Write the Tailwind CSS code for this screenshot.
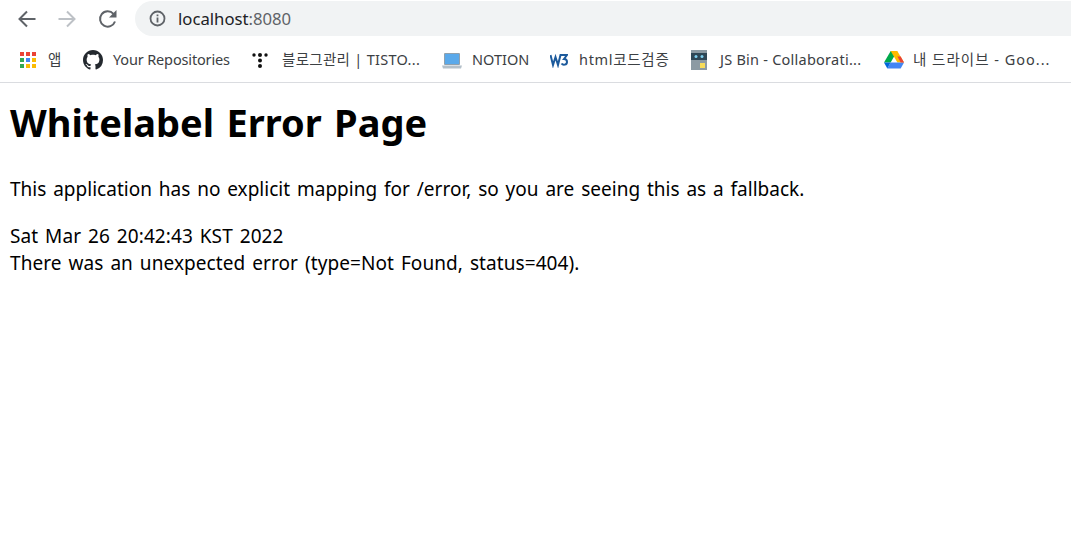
<!DOCTYPE html>
<html lang="ko">
  <head>
    <meta charset="UTF-8" />
    <title>Error</title>
    <script src="https://cdn.jsdelivr.net/npm/@tailwindcss/browser@4"></script>
  </head>
  <body class="bg-white h-[551px] w-[1071px] overflow-hidden font-['Noto_Sans','Noto_Sans_CJK_KR',sans-serif]">
    <!-- toolbar -->
    <div class="h-[37px] flex items-center pl-[17px]">
      <svg class="w-5 h-5" viewBox="0 0 20 20" fill="none" stroke="#5f6368" stroke-width="2"><path d="M18.500 10H3M10 2.500L2.500 10l7.500 7.500" /></svg>
      <svg class="w-5 h-5 ml-5" viewBox="0 0 20 20" fill="none" stroke="#bdc1c6" stroke-width="2"><path d="M1.500 10H17M10 2.500l7.500 7.500-7.500 7.500" /></svg>
      <svg class="w-5 h-5 ml-[21px]" viewBox="0 0 20 20" fill="none"><path d="M17 12.500A7.700 7.700 0 1 1 15.500 4.800" stroke="#5f6368" stroke-width="2" /><path d="M18.500 1V8.500H11z" fill="#5f6368" /></svg>
      <div class="ml-[17px] h-[35px] flex-1 rounded-l-[18px] bg-[#f1f3f4] flex items-center pl-[14px]">
        <svg class="w-[17px] h-[17px]" viewBox="0 0 17 17" fill="none"><circle cx="8.500" cy="8.500" r="7" stroke="#5f6368" stroke-width="1.800" /><path d="M8.500 7.500v5M8.500 4.400v1.800" stroke="#5f6368" stroke-width="1.800" /></svg>
        <span class="ml-3 pt-px text-[16.700px] text-[#202124] leading-none">localhost<span class="text-[#5f6368]">:8080</span></span>
      </div>
    </div>

    <!-- bookmarks -->
    <div class="h-[46px] border-b border-[#dadce0] flex items-center text-[14.500px] text-[#3c4043] whitespace-nowrap">
      <div class="ml-[20px] w-4 grid grid-cols-3 gap-[2px]">
        <i class="h-1 bg-[#ea4335]"></i><i class="h-1 bg-[#ea4335]"></i><i class="h-1 bg-[#ea4335]"></i>
        <i class="h-1 bg-[#34a853]"></i><i class="h-1 bg-[#4285f4]"></i><i class="h-1 bg-[#fbbc04]"></i>
        <i class="h-1 bg-[#34a853]"></i><i class="h-1 bg-[#fbbc04]"></i><i class="h-1 bg-[#fbbc04]"></i>
      </div>
      <span class="ml-3 w-[23px]">앱</span>

      <svg class="ml-[12px] w-5 h-5" viewBox="0 0 16 16" fill="#24292f"><path d="M8 0C3.580 0 0 3.580 0 8c0 3.540 2.290 6.530 5.470 7.590.4.070.55-.17.55-.38 0-.19-.01-.82-.01-1.490-2.010.370-2.530-.490-2.690-.940-.09-.230-.48-.940-.82-1.130-.28-.150-.68-.520-.01-.530.630-.010 1.080.580 1.230.820.720 1.210 1.870.870 2.330.660.070-.520.280-.870.510-1.070-1.780-.2-3.640-.890-3.640-3.950 0-.870.310-1.590.820-2.150-.08-.2-.36-1.020.08-2.120 0 0 .67-.21 2.200.820.640-.180 1.320-.270 2-.270s1.360.090 2 .270c1.530-1.040 2.200-.820 2.200-.820.440 1.100.160 1.920.080 2.120.510.560.820 1.270.820 2.150 0 3.070-1.870 3.750-3.650 3.950.290.250.540.730.540 1.480 0 1.070-.010 1.930-.010 2.200 0 .210.150.460.550.380A8.010 8.010 0 0 0 16 8c0-4.420-3.580-8-8-8z" /></svg>
      <span class="ml-[10px] w-[118px] tracking-[-0.15px]">Your Repositories</span>

      <svg class="ml-[21px] w-4 h-4" viewBox="0 0 16 16" fill="#111"><circle cx="2" cy="3" r="1.700" /><circle cx="8" cy="3" r="2" /><circle cx="14" cy="3" r="1.700" /><circle cx="8" cy="8.500" r="2" /><circle cx="8" cy="14" r="2" /></svg>
      <span class="ml-[14px] w-[139px] tracking-[0.3px]">블로그관리 | TISTO...</span>

      <svg class="ml-[21px] w-5 h-5" viewBox="0 0 20 20"><rect x="2" y="3" width="16" height="12" rx="1" fill="#8fa0ad" /><rect x="3" y="4" width="14" height="10" fill="#5aa9ea" /><path d="M0 15.500h20L19 18.500H1z" fill="#b4c0c9" /></svg>
      <span class="ml-[10px] w-[57px]">NOTION</span>

      <svg class="ml-[21px] w-[18px] h-[16px]" viewBox="0 0 18 16" fill="none" stroke="#1c5a9c" stroke-width="2"><path d="M0.500 3L3 13 5.500 5 8 13 10.500 3H17l-3 4c2 0 3 1 3 3 0 3-4 3.500-5.500 1.500" /></svg>
      <span class="ml-[11px] w-[91px] tracking-[0.7px]">html코드검증</span>

      <svg class="ml-[21px] w-4 h-5" viewBox="0 0 16 20"><rect width="16" height="20" fill="#8c9aa3" /><rect y="3" width="16" height="7" fill="#2f4756" /><circle cx="5" cy="6.500" r="1.500" fill="#7fd0f0" /><circle cx="11" cy="6.500" r="1.500" fill="#7fd0f0" /><rect x="9" y="13" width="5" height="5" fill="#f7dc5a" /></svg>
      <span class="ml-[13px] w-[143px] tracking-[0.24px]">JS Bin - Collaborati...</span>

      <svg class="ml-[21px] w-5 h-[18px]" viewBox="0 0 20 18"><path d="M6.700 0h6.600L6.600 11.500H0z" fill="#00a94b" /><path d="M6.700 0h6.600L20 11.500h-6.600z" fill="#ffba00" /><path d="M3.300 17.500L6.600 11.500H20l-3.300 6z" fill="#4285f4" /><path d="M0 11.500h6.600l-3.300 6z" fill="#0066da" /><path d="M20 11.500h-3.300l-3.300-6 3.300 0z" fill="#ea4335" /></svg>
      <span class="ml-[9px] tracking-[1px]">내 드라이브 - Goo...</span>
    </div>

    <!-- page -->
    <div class="px-[10px] text-black text-[19px] leading-[27px] [word-spacing:1.900px]">
      <h1 class="mt-[12px] text-[38px] leading-[54px] font-bold [word-spacing:2.500px]">Whitelabel Error Page</h1>
      <p class="mt-[27px] tracking-[0.01px]">This application has no explicit mapping for /error, so you are seeing this as a fallback.</p>
      <div class="mt-[20px] tracking-[0.08px]">Sat Mar 26 20:42:43 KST 2022</div>
      <div class="tracking-[0.08px]">There was an unexpected error (type=Not Found, status=404).</div>
    </div>
  </body>
</html>
